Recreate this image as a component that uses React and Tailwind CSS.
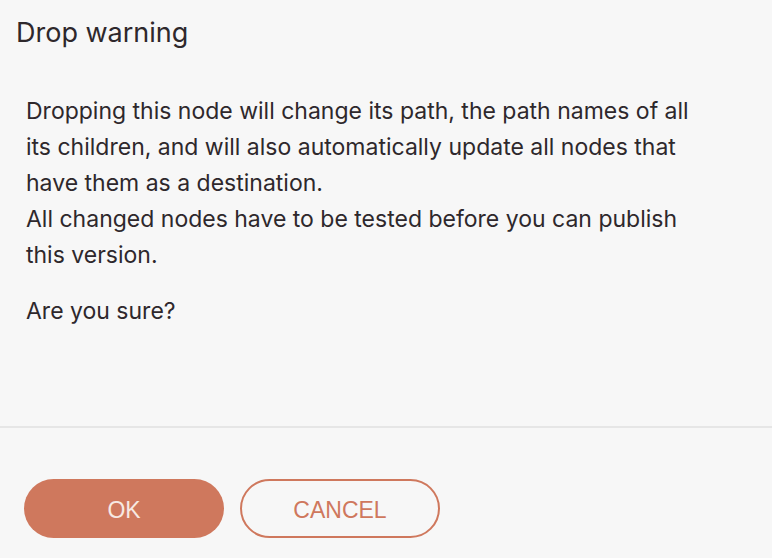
const lines = [
  'Dropping this node will change its path, the path names of all',
  'its children, and will also automatically update all nodes that',
  'have them as a destination.',
  'All changed nodes have to be tested before you can publish',
  'this version.',
];

const App = () => {
  return (
    <div className="w-[772px] h-[558px] bg-[#f7f7f7] text-[#2e282c] overflow-hidden font-['Inter',sans-serif]">
      <div className="h-[428px] border-b-2 border-[#e6e6e6]">
        <h2 className="pl-4 pt-[15px] text-[27px] leading-[36px]">Drop warning</h2>
        <div className="px-[26px] pt-[42px] text-[23px] leading-[36px]">
          {lines.map((line) => (
            <p key={line} className="whitespace-nowrap">{line}</p>
          ))}
          <p className="mt-5">Are you sure?</p>
        </div>
      </div>
      <div className="flex gap-4 px-6 pt-[51px] font-['Liberation_Sans',sans-serif] text-[23px]">
        <button className="w-[200px] h-[59px] pt-1 rounded-full bg-[#cf785d] text-[#f7e9e3]">OK</button>
        <button className="w-[200px] h-[59px] pt-1 rounded-full border-2 border-[#cf785d] text-[#cf785d]">CANCEL</button>
      </div>
    </div>
  );
};

export default App;
